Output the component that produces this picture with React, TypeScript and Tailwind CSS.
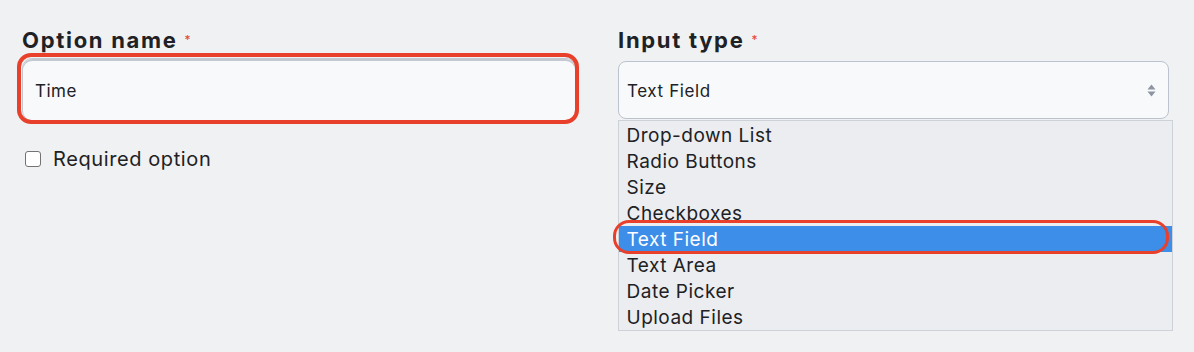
import React from 'react';

const options = [
  'Drop-down List',
  'Radio Buttons',
  'Size',
  'Checkboxes',
  'Text Field',
  'Text Area',
  'Date Picker',
  'Upload Files',
];

const Label = ({ text }: { text: string }) => (
  <div className="flex items-start h-[32px] font-['Inter',sans-serif] text-[22px] font-bold leading-[28px] text-[#202124] tracking-[1.7px]">
    {text}
    <span className="ml-[7px] mt-[4px] text-[12px] leading-[20px] text-[#e2412c] font-normal">*</span>
  </div>
);

export default function App() {
  return (
    <div className="w-[1194px] h-[352px] bg-[#f0f1f3] flex gap-[42px] pl-[22px] pt-[26px] font-['Inter',sans-serif] text-[#202124]">
      <div className="w-[554px] flex flex-col">
        <Label text="Option name" />
        <div className="relative">
          <div className="h-[63px] rounded-[10px] border border-[#c2c7d0] shadow-[inset_0_2px_0_#c3c8d1] bg-[#f8f9fb] flex items-center pl-[12px] pt-[5px] text-[17px] tracking-[0.5px]">
            Time
          </div>
          <div className="absolute -left-[5px] -right-[3px] -top-[5px] -bottom-[3px] rounded-[14px] border-[4px] border-[#e8402a]" />
        </div>
        <label className="mt-[26px] flex items-center gap-[12px] text-[20px] leading-[24px] tracking-[0.6px] pl-[3px]">
          <span className="w-[16px] h-[16px] rounded-[3px] border-[1.5px] border-[#737373] bg-white" />
          Required option
        </label>
      </div>
      <div className="w-[555px] flex flex-col">
        <Label text="Input type" />
        <div className="w-[551px] h-[58px] mt-[3px] rounded-[8px] border-[1.5px] border-[#bcc3ce] bg-[#f8f9fb] flex items-center justify-between pl-[8px] pr-[12px] text-[17px] tracking-[0.6px]">
          <span className="pt-[3px]">Text Field</span>
          <svg width="9" height="13" viewBox="0 0 9 13">
            <path d="M4.5 0.5 L8.5 5.5 L0.5 5.5 Z" fill="#8d95a3" />
            <path d="M4.5 12.5 L8.5 7.5 L0.5 7.5 Z" fill="#8d95a3" />
          </svg>
        </div>
        <div className="mt-[1px] border-[1.5px] border-[#cdd2d9] bg-[#ecedf0] pt-[0.5px] pb-[0.5px]">
          {options.map((o) => (
            <div
              key={o}
              className={`relative h-[26px] flex items-center pl-[7.5px] pt-[4px] text-[19px] tracking-[0.5px] ${
                o === 'Text Field' ? 'bg-[#3d8ee8] text-white' : ''
              }`}
            >
              {o}
              {o === 'Text Field' && (
                <div className="absolute -left-[6px] right-[3px] -top-[6px] -bottom-[2px] rounded-[16px] border-[3.5px] border-[#e8402a]" />
              )}
            </div>
          ))}
        </div>
      </div>
    </div>
  );
}
